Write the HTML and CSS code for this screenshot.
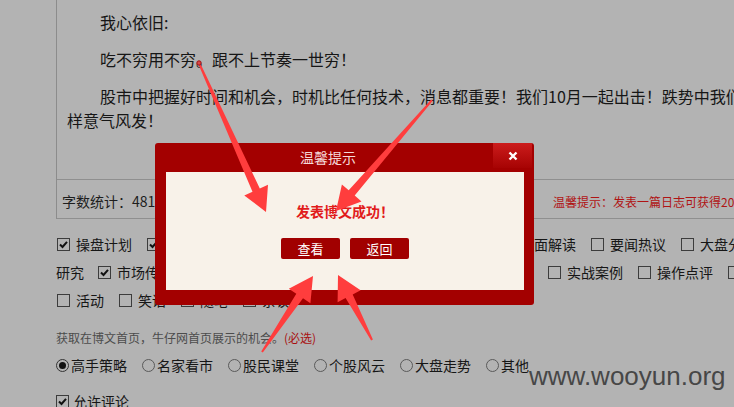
FILE: index.html
```html
<!DOCTYPE html>
<html lang="zh-CN">
<head>
<meta charset="utf-8">
<title>发表博文</title>
<link rel="stylesheet" href="styles.css">
</head>
<body>
<div class="page">
  <div class="editor">
    <div class="content">
      <p>我心依旧:</p>
      <p>吃不穷用不穷。跟不上节奏一世穷！</p>
      <p class="nowrap">股市中把握好时间和机会，时机比任何技术，消息都重要！我们10月一起出击！跌势中我们同<br>样意气风发！</p>
    </div>
    <div class="stats">
      <span>字数统计：481</span>
      <span class="tip">温馨提示：发表一篇日志可获得20积分</span>
    </div>
  </div>

  <div class="cats">
    <div class="row">
      <label class="opt"><span class="cb on"><svg viewBox="0 0 11 11"><path d="M2 5.5 L4.5 8 L9 2.8"/></svg></span>操盘计划</label>
      <label class="opt"><span class="cb on"><svg viewBox="0 0 11 11"><path d="M2 5.5 L4.5 8 L9 2.8"/></svg></span>个股诊断分析</label>
      <label class="opt"><span class="cb"></span>板块热点追踪</label>
      <label class="opt"><span class="cb"></span>主力资金动向</label>
      <label class="opt"><span class="cb"></span>盘面解读</label>
      <label class="opt"><span class="cb"></span>要闻热议</label>
      <label class="opt"><span class="cb"></span>大盘分析</label>
    </div>
    <div class="row">
      <span class="cont">研究</span>
      <label class="opt"><span class="cb on"><svg viewBox="0 0 11 11"><path d="M2 5.5 L4.5 8 L9 2.8"/></svg></span>市场传闻</label>
      <label class="opt"><span class="cb"></span>个股分析</label>
      <label class="opt"><span class="cb"></span>技术分析</label>
      <label class="opt"><span class="cb"></span>涨停揭秘</label>
      <label class="opt"><span class="cb"></span>新股申购</label>
      <label class="opt"><span class="cb"></span>实战案例</label>
      <label class="opt"><span class="cb"></span>操作点评</label>
      <label class="opt"><span class="cb"></span>炒股心得</label>
    </div>
    <div class="row">
      <label class="opt"><span class="cb"></span>活动</label>
      <label class="opt"><span class="cb"></span>笑话</label>
      <label class="opt"><span class="cb"></span>随笔</label>
      <label class="opt"><span class="cb"></span>杂谈</label>
    </div>
  </div>

  <p class="note">获取在博文首页，牛仔网首页展示的机会。<span class="req">(必选)</span></p>

  <div class="radios">
    <label class="ropt"><span class="rd on"></span>高手策略</label>
    <label class="ropt"><span class="rd"></span>名家看市</label>
    <label class="ropt"><span class="rd"></span>股民课堂</label>
    <label class="ropt"><span class="rd"></span>个股风云</label>
    <label class="ropt"><span class="rd"></span>大盘走势</label>
    <label class="ropt"><span class="rd"></span>其他</label>
  </div>

  <div class="allow">
    <span class="cb on"><svg viewBox="0 0 11 11"><path d="M2 5.5 L4.5 8 L9 2.8"/></svg></span>允许评论
  </div>
</div>

<div class="modal">
  <div class="m-head">
    <div class="m-title">温馨提示</div>
    <div class="m-close"><svg viewBox="0 0 10 10"><path d="M1.5 1.5 L8.5 8.5 M8.5 1.5 L1.5 8.5"/></svg></div>
  </div>
  <div class="m-body">
    <div class="m-msg">发表博文成功！</div>
    <div class="m-btns">
      <span class="btn">查看</span>
      <span class="btn">返回</span>
    </div>
  </div>
</div>

<svg class="arrows" width="734" height="407" viewBox="0 0 734 407">
  <g fill="#ff3d3d">
    <polygon points="199.9,62.6 259.8,188.5 268,184.8 266,212 244.3,195.4 252.5,191.8 198.1,63.4"/>
    <polygon points="432.8,100.7 354.7,195.5 361.5,201.4 336,211 341.9,184.4 348.7,190.2 431.2,99.4"/>
    <polygon points="261.2,351.4 296.3,293.7 288.8,288.7 313,276 310.4,303.2 303,298.2 262.8,352.6"/>
    <polygon points="371.1,340.5 345.6,298.1 337.6,302.3 338,275 360.6,290.2 352.7,294.4 372.9,339.5"/>
  </g>
  <circle cx="199" cy="63" r="2.2" fill="#d84a4a" stroke="#a01010" stroke-width="1"/>
</svg>

<div class="watermark">www.wooyun.org</div>
</body>
</html>
```

FILE: styles.css
```css
html, body {
  margin: 0;
  padding: 0;
}
body {
  width: 734px;
  height: 407px;
  overflow: hidden;
  position: relative;
  background: #b3b3b3;
  color: #161616;
  font-family: "Noto Sans CJK SC", "Microsoft YaHei", sans-serif;
}
.page {
  width: 900px;
  padding-left: 56px;
}
.editor {
  border-left: 1px solid #8c8c8c;
}
.content {
  height: 169px;
  padding: 10px 0 0 10px;
  border-bottom: 1px solid #8f8f8f;
  font-size: 16px;
  line-height: 24px;
}
.content p {
  margin: 0 0 13px;
  text-indent: 33px;
}
.content .nowrap {
  white-space: nowrap;
}
.stats {
  height: 34px;
  padding: 4px 0 0 5px;
  border-bottom: 1px solid #8f8f8f;
  display: grid;
  grid-template-columns: 491px auto;
  align-items: center;
  font-size: 14px;
  color: #1e1e1e;
}
.stats .tip {
  font-size: 12px;
  color: #b01414;
  white-space: nowrap;
}
.cats {
  margin-top: 11px;
  font-size: 14px;
}
.row {
  display: flex;
  align-items: center;
  height: 28px;
  white-space: nowrap;
}
.opt {
  display: flex;
  align-items: center;
  flex: none;
  margin-right: 14px;
}
.cont {
  margin-right: 13px;
}
.cb {
  box-sizing: border-box;
  width: 13px;
  height: 13px;
  border: 1px solid #3c3c3c;
  margin-left: 1px;
  margin-right: 6px;
  display: flex;
  align-items: center;
  justify-content: center;
  flex: none;
}
.cb svg {
  width: 11px;
  height: 11px;
}
.cb svg path {
  fill: none;
  stroke: #111;
  stroke-width: 2;
}
.note {
  margin: 14px 0 0;
  font-size: 12px;
  line-height: 20px;
  color: #4c4c4c;
}
.note .req {
  color: #a81010;
}
.radios {
  margin-top: 3px;
  display: flex;
  align-items: center;
  height: 28px;
  font-size: 14px;
  white-space: nowrap;
}
.ropt {
  display: flex;
  align-items: center;
  margin-right: 15px;
}
.rd {
  box-sizing: border-box;
  width: 13px;
  height: 13px;
  border: 1px solid #5a5a5a;
  border-radius: 50%;
  margin-right: 2px;
  display: flex;
  align-items: center;
  justify-content: center;
}
.rd.on {
  border-color: #333;
}
.rd.on::after {
  content: "";
  width: 7px;
  height: 7px;
  border-radius: 50%;
  background: #111;
}
.allow {
  margin-top: 8px;
  height: 28px;
  display: flex;
  align-items: center;
  font-size: 14px;
}
.allow .cb {
  margin-left: 0;
  margin-right: 4px;
}
.modal {
  position: absolute;
  left: 155px;
  top: 143px;
  width: 379px;
  height: 162px;
  background: #a30000;
  border-radius: 3px;
  display: flex;
  flex-direction: column;
}
.m-head {
  height: 29px;
  display: flex;
  align-items: flex-start;
}
.m-title {
  flex: 1;
  padding-left: 8px;
  text-align: center;
  line-height: 29px;
  font-size: 14px;
  color: #f5d9d9;
}
.m-close {
  width: 39px;
  height: 25px;
  margin-right: 2px;
  background: linear-gradient(#cc1c1c, #a60303);
  display: flex;
  align-items: center;
  justify-content: center;
}
.m-close svg {
  width: 10px;
  height: 10px;
}
.m-close svg path {
  stroke: #fff;
  stroke-width: 2.4;
}
.m-body {
  flex: 1;
  margin: 0 10px 15px 11px;
  background: #f8f2e9;
  display: flex;
  flex-direction: column;
  align-items: center;
  padding-top: 28px;
}
.m-msg {
  font-size: 14px;
  font-weight: bold;
  line-height: 22px;
  color: #e11b1b;
}
.m-btns {
  display: flex;
  gap: 10px;
  margin-top: 16px;
}
.btn {
  width: 59px;
  height: 21px;
  line-height: 21px;
  text-align: center;
  font-size: 13px;
  color: #fff;
  background: #a10000;
  border-radius: 2px;
}
.arrows {
  position: absolute;
  left: 0;
  top: 0;
}
.watermark {
  position: absolute;
  left: 529px;
  top: 361px;
  font-family: "Liberation Sans", Arial, sans-serif;
  font-size: 26px;
  line-height: 30px;
  color: #474747;
}
```
